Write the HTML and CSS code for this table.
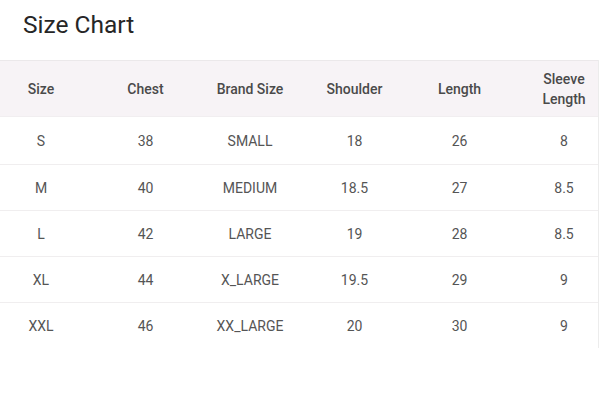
FILE: index.html
```html
<!DOCTYPE html>
<html>
<head>
<meta charset="utf-8">
<link rel="stylesheet" href="styles.css">
</head>
<body>
<div class="page">
  <h1 class="title">Size Chart</h1>
  <div class="table">
    <div class="row head">
      <div class="cell first-col">Size</div>
      <div class="cell">Chest</div>
      <div class="cell">Brand Size</div>
      <div class="cell">Shoulder</div>
      <div class="cell">Length</div>
      <div class="cell last">Sleeve<br>Length</div>
    </div>
    <div class="row first">
      <div class="cell first-col">S</div><div class="cell">38</div><div class="cell">SMALL</div><div class="cell">18</div><div class="cell">26</div><div class="cell last">8</div>
    </div>
    <div class="row">
      <div class="cell first-col">M</div><div class="cell">40</div><div class="cell">MEDIUM</div><div class="cell">18.5</div><div class="cell">27</div><div class="cell last">8.5</div>
    </div>
    <div class="row">
      <div class="cell first-col">L</div><div class="cell">42</div><div class="cell">LARGE</div><div class="cell">19</div><div class="cell">28</div><div class="cell last">8.5</div>
    </div>
    <div class="row">
      <div class="cell first-col">XL</div><div class="cell">44</div><div class="cell">X_LARGE</div><div class="cell">19.5</div><div class="cell">29</div><div class="cell last">9</div>
    </div>
    <div class="row">
      <div class="cell first-col">XXL</div><div class="cell">46</div><div class="cell">XX_LARGE</div><div class="cell">20</div><div class="cell">30</div><div class="cell last">9</div>
    </div>
  </div>
</div>
</body>
</html>
```
FILE: styles.css
```css
html, body {
  margin: 0;
  padding: 0;
  background: #ffffff;
}
.page {
  width: 600px;
  height: 408px;
  font-family: Roboto, "Liberation Sans", sans-serif;
  overflow: hidden;
}
.title {
  margin: 0;
  padding: 9px 0 0 23px;
  height: 60px;
  box-sizing: border-box;
  font-size: 24.5px;
  font-weight: 400;
  color: #262626;
  line-height: 32px;
}
.table {
  width: 598px;
  border-right: 1px solid #ececec;
}
.row {
  display: grid;
  grid-template-columns: 93px 105px 104px 105px 105px 86px;
  height: 46px;
  border-top: 1px solid #f0eeef;
  box-sizing: border-box;
  font-size: 14px;
  color: #555555;
}
.row.head {
  height: 57px;
  background: #f7f3f6;
  border-top: 1px solid #ebe8ea;
  border-bottom: 1px solid #f1eef0;
  font-weight: 500;
  color: #4a4a4a;
  line-height: 20px;
}
.row.first {
  border-top: none;
  height: 47px;
}
.cell {
  display: flex;
  align-items: center;
  justify-content: center;
  text-align: center;
}
.cell.first-col {
  padding-right: 11px;
}
.cell.last {
  padding-left: 18px;
}
```
